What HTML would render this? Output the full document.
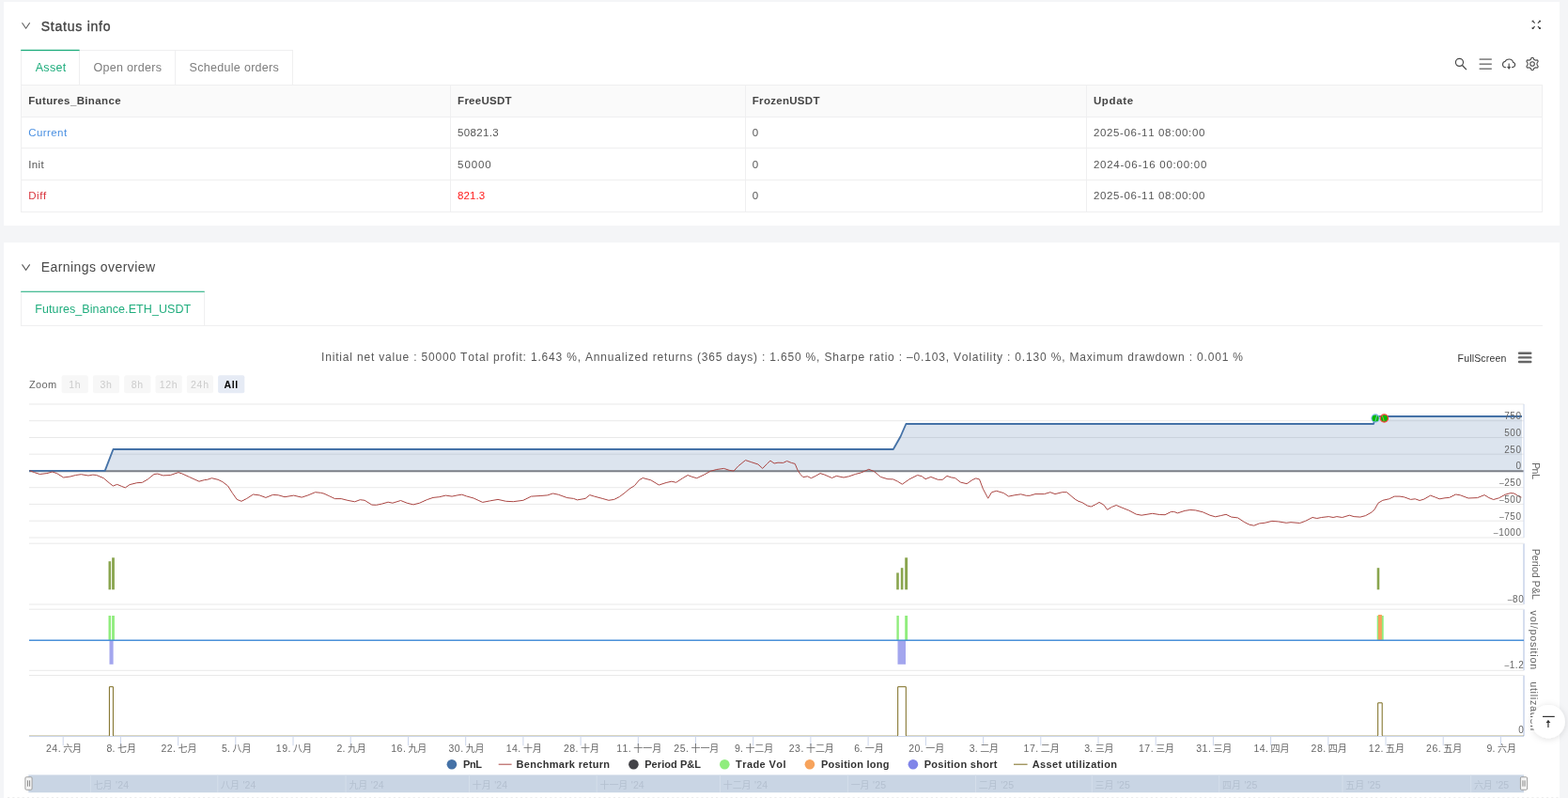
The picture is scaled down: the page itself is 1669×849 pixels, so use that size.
<!DOCTYPE html>
<html><head><meta charset="utf-8"><title>Backtest</title>
<style>
html,body{margin:0;padding:0}
body{width:1669px;height:849px;overflow:hidden;position:relative;background:#f4f5f7;font-family:"Liberation Sans",sans-serif;font-size:13px;color:#555}
.panel{position:absolute;background:#fff}
.ln{position:absolute}
.t{position:absolute;white-space:nowrap;line-height:20px;font-kerning:none}
.yl{font-size:10px;fill:#666;letter-spacing:0.55px}
.yt{font-size:10.8px;fill:#666}
.xl{font-size:10.5px;fill:#666}
.lg{font-size:11px;font-weight:bold;fill:#333}
.nv{font-size:10.5px;fill:#b4c0d0}
.tt{font-size:12px;fill:#585858}
.fs{font-size:10.5px;fill:#333}
.zm{font-size:11px;fill:#666}
.zb{font-size:10.5px;fill:#cccccc;letter-spacing:0.7px}
.cx{font-size:10px;fill:#666}
.cn{font-size:10px;fill:#b4c0d0}
svg text{font-family:"Liberation Sans","Noto Sans CJK SC",sans-serif;font-kerning:none}
</style></head><body>
<div class="panel" style="left:4px;top:2px;width:1656px;height:238px"></div>
<div class="panel" style="left:4px;top:258px;width:1656px;height:600px"></div>
<div class="ln" style="left:22px;top:90px;width:1620px;height:34px;background:#fafafa"></div>
<div class="ln" style="left:22px;top:90px;width:1620px;height:1px;background:#efeff0"></div>
<div class="ln" style="left:22px;top:124px;width:1620px;height:1px;background:#efeff0"></div>
<div class="ln" style="left:22px;top:157px;width:1620px;height:1px;background:#efeff0"></div>
<div class="ln" style="left:22px;top:191px;width:1620px;height:1px;background:#efeff0"></div>
<div class="ln" style="left:22px;top:225px;width:1620px;height:1px;background:#efeff0"></div>
<div class="ln" style="left:22px;top:90px;width:1px;height:136px;background:#efeff0"></div>
<div class="ln" style="left:479px;top:90px;width:1px;height:136px;background:#efeff0"></div>
<div class="ln" style="left:793px;top:90px;width:1px;height:136px;background:#efeff0"></div>
<div class="ln" style="left:1156px;top:90px;width:1px;height:136px;background:#efeff0"></div>
<div class="ln" style="left:1641px;top:90px;width:1px;height:136px;background:#efeff0"></div>
<div class="ln" style="left:22px;top:53px;width:290px;height:1px;background:#efeff0"></div>
<div class="ln" style="left:22px;top:53px;width:1px;height:37px;background:#efeff0"></div>
<div class="ln" style="left:84px;top:53px;width:1px;height:37px;background:#efeff0"></div>
<div class="ln" style="left:186px;top:53px;width:1px;height:37px;background:#efeff0"></div>
<div class="ln" style="left:311px;top:53px;width:1px;height:37px;background:#efeff0"></div>
<div class="ln" style="left:22px;top:346px;width:1620px;height:1px;background:#efeff0"></div>
<div class="ln" style="left:22px;top:310px;width:1px;height:37px;background:#efeff0"></div>
<div class="ln" style="left:217px;top:310px;width:1px;height:37px;background:#efeff0"></div>
<div style="position:absolute;left:0;top:0;width:1669px;height:849px;will-change:transform">
<span class="t" style="left:43.7px;top:18.15px;font-size:14px;letter-spacing:0.766px;color:#444;font-weight:normal;-webkit-text-stroke:0.35px #444;">Status info</span>
<span class="t" style="left:43.8px;top:274.15px;font-size:14px;letter-spacing:0.427px;color:#484848;font-weight:normal;">Earnings overview</span>
<span class="t" style="left:37.7px;top:61.57px;font-size:12.5px;letter-spacing:0.313px;color:#1fad7d;font-weight:normal;">Asset</span>
<span class="t" style="left:99.4px;top:61.57px;font-size:12.5px;letter-spacing:0.323px;color:#7d7d7d;font-weight:normal;">Open orders</span>
<span class="t" style="left:201.6px;top:61.57px;font-size:12.5px;letter-spacing:0.299px;color:#7d7d7d;font-weight:normal;">Schedule orders</span>
<span class="t" style="left:37.3px;top:318.57px;font-size:12.5px;letter-spacing:0.085px;color:#1fad7d;font-weight:normal;">Futures_Binance.ETH_USDT</span>
<span class="t" style="left:30.2px;top:96.92px;font-size:11.5px;letter-spacing:0.360px;color:#444;font-weight:bold;">Futures_Binance</span>
<span class="t" style="left:487.1px;top:96.92px;font-size:11.5px;letter-spacing:0.264px;color:#444;font-weight:bold;">FreeUSDT</span>
<span class="t" style="left:800.8px;top:96.92px;font-size:11.5px;letter-spacing:0.294px;color:#444;font-weight:bold;">FrozenUSDT</span>
<span class="t" style="left:1163.9px;top:96.92px;font-size:11.5px;letter-spacing:0.674px;color:#444;font-weight:bold;">Update</span>
<span class="t" style="left:30.2px;top:131.02px;font-size:11.5px;letter-spacing:0.434px;color:#4a90e2;font-weight:normal;">Current</span>
<span class="t" style="left:487.1px;top:131.02px;font-size:11.5px;letter-spacing:0.313px;color:#555555;font-weight:normal;">50821.3</span>
<span class="t" style="left:800.8px;top:131.02px;font-size:11.5px;letter-spacing:0.552px;color:#555555;font-weight:normal;">0</span>
<span class="t" style="left:1163.9px;top:131.02px;font-size:11.5px;letter-spacing:0.648px;color:#555555;font-weight:normal;">2025-06-11 08:00:00</span>
<span class="t" style="left:30.2px;top:164.62px;font-size:11.5px;letter-spacing:0.369px;color:#555555;font-weight:normal;">Init</span>
<span class="t" style="left:487.1px;top:164.62px;font-size:11.5px;letter-spacing:0.917px;color:#555555;font-weight:normal;">50000</span>
<span class="t" style="left:800.8px;top:164.62px;font-size:11.5px;letter-spacing:0.552px;color:#555555;font-weight:normal;">0</span>
<span class="t" style="left:1163.9px;top:164.62px;font-size:11.5px;letter-spacing:0.759px;color:#555555;font-weight:normal;">2024-06-16 00:00:00</span>
<span class="t" style="left:30.2px;top:197.82px;font-size:11.5px;letter-spacing:0.566px;color:#d9363e;font-weight:normal;">Diff</span>
<span class="t" style="left:487.1px;top:197.82px;font-size:11.5px;letter-spacing:0.092px;color:#ff1a1a;font-weight:normal;">821.3</span>
<span class="t" style="left:800.8px;top:197.82px;font-size:11.5px;letter-spacing:0.552px;color:#555555;font-weight:normal;">0</span>
<span class="t" style="left:1163.9px;top:197.82px;font-size:11.5px;letter-spacing:0.648px;color:#555555;font-weight:normal;">2025-06-11 08:00:00</span>
</div>
<svg width="1669" height="849" viewBox="0 0 1669 849" style="position:absolute;left:0;top:0;will-change:transform">
<defs><filter id="sh" x="-50%" y="-50%" width="200%" height="200%"><feDropShadow dx="0" dy="1" stdDeviation="3.5" flood-color="#000" flood-opacity="0.13"/></filter>
<clipPath id="cp4"><rect x="0" y="700" width="1669" height="83"/></clipPath></defs>
<rect x="22.2" y="52.8" width="62.4" height="1.35" fill="#1fad7d"/><rect x="22.2" y="309.75" width="195.5" height="1.05" fill="#1fad7d"/>
<path d="M31 430.0H1622" stroke="#e9e9e9" stroke-width="1"/>
<path d="M31 447.7H1622" stroke="#e9e9e9" stroke-width="1"/>
<path d="M31 465.5H1622" stroke="#e9e9e9" stroke-width="1"/>
<path d="M31 483.2H1622" stroke="#e9e9e9" stroke-width="1"/>
<path d="M31 518.7H1622" stroke="#e9e9e9" stroke-width="1"/>
<path d="M31 536.4H1622" stroke="#e9e9e9" stroke-width="1"/>
<path d="M31 554.2H1622" stroke="#e9e9e9" stroke-width="1"/>
<path d="M31 572.0H1622" stroke="#e9e9e9" stroke-width="1"/>
<path d="M31 500.9 L111.7 500.9 L120.5 478 L950.8 478 L958.5 464.5 L962.2 456 L964.4 451 L1462 451 L1464.5 443 L1620 443 L1620 501 L31 501 Z" fill="#4572A7" fill-opacity="0.19"/>
<path d="M31 501.25H1622" stroke="#7b7f87" stroke-width="2.2"/>
<path d="M31 500.9 L111.7 500.9 L120.5 478 L950.8 478 L958.5 464.5 L962.2 456 L964.4 451 L1462 451 L1464.5 443 L1620 443" fill="none" stroke="#4572A7" stroke-width="1.85" stroke-linejoin="round"/>
<path d="M31.7 500.7 L36.5 502.6 L42.3 504.5 L49.9 503.6 L55.7 502.0 L60.5 503.6 L67.6 508.0 L74.9 507.0 L80.6 505.5 L86.4 504.7 L94.0 506.0 L98.8 505.1 L102.7 505.5 L110.3 508.7 L116.1 513.7 L120.3 517.0 L124.7 515.4 L129.5 517.4 L133.3 518.9 L138.1 515.6 L145.8 513.7 L151.5 513.3 L157.3 509.9 L164.0 504.5 L167.8 504.1 L173.6 505.9 L181.3 505.5 L189.9 502.6 L193.7 503.9 L201.4 507.4 L211.9 512.2 L217.7 510.6 L220.6 510.3 L225.4 508.7 L232.1 510.3 L236.9 512.6 L242.6 517.0 L247.4 524.6 L252.2 531.4 L257.0 533.3 L262.7 530.4 L269.5 526.0 L276.2 526.9 L282.9 529.4 L290.5 526.4 L296.3 526.8 L303.0 528.7 L312.6 527.1 L321.2 529.1 L327.9 526.9 L335.6 523.7 L341.4 524.3 L345.0 525.2 L350.8 527.9 L356.5 530.6 L363.2 530.6 L369.9 532.3 L377.6 533.8 L383.3 531.7 L388.1 532.3 L395.8 537.1 L400.6 537.3 L406.4 536.1 L413.1 534.2 L417.9 535.2 L426.5 532.5 L433.2 535.2 L439.9 536.9 L446.6 535.2 L454.3 531.7 L461.0 529.4 L467.7 528.7 L474.4 527.1 L481.1 528.1 L486.9 526.9 L491.7 526.2 L496.5 527.9 L504.1 530.0 L509.9 532.7 L513.7 534.4 L521.4 532.9 L530.0 531.4 L538.6 533.3 L546.3 533.7 L556.9 532.3 L565.5 528.1 L575.1 527.5 L582.7 526.9 L588.5 525.0 L594.3 526.2 L603.8 529.6 L610.5 530.4 L614.4 531.9 L623.0 530.4 L627.8 526.6 L632.6 528.1 L641.2 530.4 L647.9 532.3 L653.7 531.4 L659.4 528.5 L665.0 524.3 L669.8 520.2 L675.5 516.6 L680.3 510.8 L684.2 508.5 L692.8 510.8 L701.4 516.0 L709.1 513.5 L714.9 512.2 L719.6 513.3 L726.4 508.9 L732.1 505.5 L736.9 507.4 L741.7 508.7 L749.4 505.1 L756.1 501.3 L762.8 499.5 L770.5 498.4 L776.2 500.3 L781.0 501.1 L785.8 495.9 L793.5 489.6 L799.2 491.5 L806.9 494.0 L811.7 498.4 L816.5 493.4 L819.9 490.1 L824.1 493.0 L828.0 492.2 L833.7 492.4 L837.6 490.5 L842.4 492.4 L846.2 493.4 L849.1 500.3 L851.9 504.5 L854.8 507.6 L859.6 506.8 L863.4 508.7 L868.2 506.4 L873.0 503.6 L877.8 505.1 L885.5 508.5 L890.3 506.4 L898.0 508.0 L903.7 506.8 L910.4 504.5 L916.2 503.0 L924.8 499.3 L930.5 501.6 L937.3 507.4 L944.9 509.7 L950.7 509.9 L955.5 512.2 L960.3 515.2 L967.9 509.9 L976.6 505.5 L981.4 506.8 L985.0 509.7 L990.8 507.4 L998.4 510.3 L1003.2 510.3 L1008.0 506.4 L1012.8 508.0 L1016.6 508.5 L1022.4 513.1 L1029.1 514.7 L1034.9 510.6 L1038.7 508.9 L1042.5 509.9 L1046.4 520.2 L1051.7 530.2 L1055.6 523.7 L1060.7 522.3 L1068.4 524.6 L1073.6 528.1 L1079.9 526.8 L1086.6 525.8 L1092.4 527.3 L1096.2 527.3 L1102.0 525.6 L1111.5 525.6 L1117.9 523.7 L1123.0 525.6 L1130.7 523.7 L1135.5 523.7 L1144.1 531.0 L1148.0 533.3 L1151.8 534.6 L1157.6 538.1 L1161.4 539.0 L1166.2 536.7 L1170.0 534.4 L1174.8 537.1 L1178.6 542.3 L1183.4 539.4 L1188.2 537.5 L1193.0 539.6 L1201.7 543.1 L1209.3 547.1 L1215.1 548.2 L1226.6 546.3 L1234.3 547.5 L1240.0 547.7 L1246.7 544.4 L1249.6 544.4 L1253.4 545.9 L1261.1 543.4 L1266.8 542.5 L1272.6 542.9 L1280.3 544.8 L1287.9 548.2 L1293.7 549.8 L1299.4 548.6 L1305.0 547.3 L1310.8 550.1 L1317.5 550.9 L1324.2 555.3 L1329.9 558.2 L1334.7 559.2 L1340.5 556.9 L1346.2 556.3 L1353.9 554.4 L1360.6 554.9 L1369.2 556.3 L1374.0 555.7 L1383.6 556.5 L1389.4 554.4 L1397.0 550.5 L1401.8 551.5 L1406.6 550.5 L1414.3 549.6 L1419.1 550.5 L1422.9 549.6 L1428.7 550.5 L1436.3 548.2 L1441.1 549.6 L1447.8 550.1 L1453.6 548.6 L1460.3 544.8 L1463.2 541.9 L1467.0 535.2 L1471.8 532.3 L1478.5 530.8 L1484.3 528.1 L1490.0 528.1 L1494.8 528.9 L1501.5 531.4 L1506.3 530.8 L1511.1 532.5 L1515.9 531.0 L1522.6 527.1 L1527.4 528.9 L1532.2 530.8 L1538.0 529.8 L1542.7 529.4 L1549.5 526.0 L1554.3 526.8 L1562.9 530.0 L1572.5 529.6 L1580.1 526.6 L1584.9 529.6 L1589.7 531.5 L1595.5 529.8 L1602.2 526.2 L1607.9 524.6 L1611.8 525.0 L1616.6 528.1 L1619.4 529.1" fill="none" stroke="#AA4643" stroke-width="1" stroke-linejoin="round"/>
<circle cx="1464" cy="445" r="4.1" fill="#00bb00" stroke="#8ab8f0" stroke-width="1.1"/>
<circle cx="1473.4" cy="445" r="4.1" fill="#00bb00" stroke="#ff4040" stroke-width="1.3"/>
<path d="M1465.7 441.8L1463.9 448.2" stroke="#9cc4f2" stroke-width="0.8"/><path d="M1471.4 442.2L1473.2 448" stroke="#ff7a6a" stroke-width="0.8"/>
<text x="1619.6" y="446.0" text-anchor="end" class="yl">750</text>
<text x="1619.6" y="463.8" text-anchor="end" class="yl">500</text>
<text x="1619.6" y="481.5" text-anchor="end" class="yl">250</text>
<text x="1619.6" y="499.3" text-anchor="end" class="yl">0</text>
<text x="1619.6" y="517.0" text-anchor="end" class="yl"><tspan font-size="8.6">–</tspan>250</text>
<text x="1619.6" y="534.7" text-anchor="end" class="yl"><tspan font-size="8.6">–</tspan>500</text>
<text x="1619.6" y="552.5" text-anchor="end" class="yl"><tspan font-size="8.6">–</tspan>750</text>
<text x="1619.6" y="570.3" text-anchor="end" class="yl"><tspan font-size="8.6">–</tspan>1000</text>
<path d="M1622 430V572" stroke="#ccd6eb" stroke-width="1"/>
<path d="M1622 578.2V643" stroke="#ccd6eb" stroke-width="1.6"/>
<path d="M1622 648.2V713.3" stroke="#ccd6eb" stroke-width="1.6"/>
<path d="M1622 718.5V783" stroke="#ccd6eb" stroke-width="1.6"/>
<path d="M31 578.2H1622" stroke="#e9e9e9" stroke-width="1"/>
<path d="M31 643H1622" stroke="#e9e9e9" stroke-width="1"/>
<path d="M31 648.2H1622" stroke="#e9e9e9" stroke-width="1"/>
<path d="M31 713.3H1622" stroke="#e9e9e9" stroke-width="1"/>
<path d="M31 718.5H1622" stroke="#e9e9e9" stroke-width="1"/>
<rect x="115.5" y="597.2" width="2.60" height="30.10" fill="#89A54E" />
<rect x="119.1" y="593.3" width="2.80" height="34.00" fill="#89A54E" />
<rect x="954.2" y="609.4" width="2.60" height="17.90" fill="#89A54E" />
<rect x="958.8" y="604.2" width="2.60" height="23.10" fill="#89A54E" />
<rect x="963.2" y="593.3" width="2.90" height="34.00" fill="#89A54E" />
<rect x="1465.7" y="604.2" width="2.60" height="23.10" fill="#89A54E" />
<rect x="115.5" y="655" width="2.60" height="26.00" fill="#90ed7d" />
<rect x="119.1" y="655" width="2.80" height="26.00" fill="#90ed7d" />
<rect x="954.4" y="655" width="2.40" height="26.00" fill="#90ed7d" />
<rect x="963.2" y="655" width="2.90" height="26.00" fill="#90ed7d" />
<rect x="1465.7" y="655" width="7.00" height="26.00" fill="#90ed7d" />
<rect x="116.5" y="681" width="4.10" height="25.80" fill="#a3a6ee" />
<rect x="955.5" y="681" width="8.50" height="25.80" fill="#a3a6ee" />
<rect x="1467" y="654" width="3.90" height="27.00" fill="#f7a35c" />
<path d="M31 681.2H1622" stroke="#4a90d9" stroke-width="1.6"/>
<path d="M31 783.5H1622" stroke="#ccd6eb" stroke-width="1"/>
<path d="M31 782.5H1622" fill="none" stroke="#7a6a1e" stroke-width="1" stroke-opacity="0.28"/>
<path d="M116.4 783V730.7H120.4V783" fill="none" stroke="#7a6a1e" stroke-width="1"/>
<path d="M116.9 782.5H119.9" stroke="#fff" stroke-width="1"/>
<path d="M955.7 783V730.7H964.3V783" fill="none" stroke="#7a6a1e" stroke-width="1"/>
<path d="M956.2 782.5H963.8" stroke="#fff" stroke-width="1"/>
<path d="M1466.7 783V747.8H1471.2V783" fill="none" stroke="#7a6a1e" stroke-width="1"/>
<path d="M1467.2 782.5H1470.7" stroke="#fff" stroke-width="1"/>
<text x="1622.3" y="640.7" text-anchor="end" class="yl"><tspan font-size="8.6">–</tspan>80</text>
<text x="1622.3" y="710.6" text-anchor="end" class="yl"><tspan font-size="8.6">–</tspan>1.2</text>
<text x="1622.3" y="780.4" text-anchor="end" class="yl">0</text>
<text transform="translate(1631.0 492.0) rotate(90)" class="yt" textLength="18.0" lengthAdjust="spacing">PnL</text>
<text transform="translate(1630.5 583.7) rotate(90)" class="yt" textLength="54.2" lengthAdjust="spacing">Period P&amp;L</text>
<text transform="translate(1628.9 649.5) rotate(90)" class="yt" textLength="62.7" lengthAdjust="spacing">vol/position</text>
<text transform="translate(1628.9 725.2) rotate(90)" class="yt" textLength="52.0" lengthAdjust="spacing">utilization</text>
<path d="M67.2 784V793.3" stroke="#ccd6eb" stroke-width="1"/>
<text x="49.00" y="800" class="xl" textLength="15.6" lengthAdjust="spacing">24.</text>
<text x="67.20" y="800.3" class="cx" textLength="19.9" lengthAdjust="spacing">六月</text>
<path d="M128.4 784V793.3" stroke="#ccd6eb" stroke-width="1"/>
<text x="113.56" y="800" class="xl" textLength="8.9" lengthAdjust="spacing">8.</text>
<text x="125.06" y="800.3" class="cx" textLength="19.9" lengthAdjust="spacing">七月</text>
<path d="M189.6 784V793.3" stroke="#ccd6eb" stroke-width="1"/>
<text x="171.42" y="800" class="xl" textLength="15.6" lengthAdjust="spacing">22.</text>
<text x="189.62" y="800.3" class="cx" textLength="19.9" lengthAdjust="spacing">七月</text>
<path d="M250.8 784V793.3" stroke="#ccd6eb" stroke-width="1"/>
<text x="235.98" y="800" class="xl" textLength="8.9" lengthAdjust="spacing">5.</text>
<text x="247.48" y="800.3" class="cx" textLength="19.9" lengthAdjust="spacing">八月</text>
<path d="M312.0 784V793.3" stroke="#ccd6eb" stroke-width="1"/>
<text x="293.84" y="800" class="xl" textLength="15.6" lengthAdjust="spacing">19.</text>
<text x="312.04" y="800.3" class="cx" textLength="19.9" lengthAdjust="spacing">八月</text>
<path d="M373.2 784V793.3" stroke="#ccd6eb" stroke-width="1"/>
<text x="358.40" y="800" class="xl" textLength="8.9" lengthAdjust="spacing">2.</text>
<text x="369.90" y="800.3" class="cx" textLength="19.9" lengthAdjust="spacing">九月</text>
<path d="M434.5 784V793.3" stroke="#ccd6eb" stroke-width="1"/>
<text x="416.26" y="800" class="xl" textLength="15.6" lengthAdjust="spacing">16.</text>
<text x="434.46" y="800.3" class="cx" textLength="19.9" lengthAdjust="spacing">九月</text>
<path d="M495.7 784V793.3" stroke="#ccd6eb" stroke-width="1"/>
<text x="477.47" y="800" class="xl" textLength="15.6" lengthAdjust="spacing">30.</text>
<text x="495.67" y="800.3" class="cx" textLength="19.9" lengthAdjust="spacing">九月</text>
<path d="M556.9 784V793.3" stroke="#ccd6eb" stroke-width="1"/>
<text x="538.68" y="800" class="xl" textLength="15.6" lengthAdjust="spacing">14.</text>
<text x="556.88" y="800.3" class="cx" textLength="19.9" lengthAdjust="spacing">十月</text>
<path d="M618.1 784V793.3" stroke="#ccd6eb" stroke-width="1"/>
<text x="599.89" y="800" class="xl" textLength="15.6" lengthAdjust="spacing">28.</text>
<text x="618.09" y="800.3" class="cx" textLength="19.9" lengthAdjust="spacing">十月</text>
<path d="M679.3 784V793.3" stroke="#ccd6eb" stroke-width="1"/>
<text x="656.15" y="800" class="xl" textLength="15.6" lengthAdjust="spacing">11.</text>
<text x="674.35" y="800.3" class="cx" textLength="29.8" lengthAdjust="spacing">十一月</text>
<path d="M740.5 784V793.3" stroke="#ccd6eb" stroke-width="1"/>
<text x="717.36" y="800" class="xl" textLength="15.6" lengthAdjust="spacing">25.</text>
<text x="735.56" y="800.3" class="cx" textLength="29.8" lengthAdjust="spacing">十一月</text>
<path d="M801.7 784V793.3" stroke="#ccd6eb" stroke-width="1"/>
<text x="781.92" y="800" class="xl" textLength="8.9" lengthAdjust="spacing">9.</text>
<text x="793.42" y="800.3" class="cx" textLength="29.8" lengthAdjust="spacing">十二月</text>
<path d="M862.9 784V793.3" stroke="#ccd6eb" stroke-width="1"/>
<text x="839.78" y="800" class="xl" textLength="15.6" lengthAdjust="spacing">23.</text>
<text x="857.98" y="800.3" class="cx" textLength="29.8" lengthAdjust="spacing">十二月</text>
<path d="M924.1 784V793.3" stroke="#ccd6eb" stroke-width="1"/>
<text x="909.29" y="800" class="xl" textLength="8.9" lengthAdjust="spacing">6.</text>
<text x="920.79" y="800.3" class="cx" textLength="19.9" lengthAdjust="spacing">一月</text>
<path d="M985.4 784V793.3" stroke="#ccd6eb" stroke-width="1"/>
<text x="967.15" y="800" class="xl" textLength="15.6" lengthAdjust="spacing">20.</text>
<text x="985.35" y="800.3" class="cx" textLength="19.9" lengthAdjust="spacing">一月</text>
<path d="M1046.6 784V793.3" stroke="#ccd6eb" stroke-width="1"/>
<text x="1031.71" y="800" class="xl" textLength="8.9" lengthAdjust="spacing">3.</text>
<text x="1043.21" y="800.3" class="cx" textLength="19.9" lengthAdjust="spacing">二月</text>
<path d="M1107.8 784V793.3" stroke="#ccd6eb" stroke-width="1"/>
<text x="1089.57" y="800" class="xl" textLength="15.6" lengthAdjust="spacing">17.</text>
<text x="1107.77" y="800.3" class="cx" textLength="19.9" lengthAdjust="spacing">二月</text>
<path d="M1169.0 784V793.3" stroke="#ccd6eb" stroke-width="1"/>
<text x="1154.13" y="800" class="xl" textLength="8.9" lengthAdjust="spacing">3.</text>
<text x="1165.63" y="800.3" class="cx" textLength="19.9" lengthAdjust="spacing">三月</text>
<path d="M1230.2 784V793.3" stroke="#ccd6eb" stroke-width="1"/>
<text x="1211.99" y="800" class="xl" textLength="15.6" lengthAdjust="spacing">17.</text>
<text x="1230.19" y="800.3" class="cx" textLength="19.9" lengthAdjust="spacing">三月</text>
<path d="M1291.4 784V793.3" stroke="#ccd6eb" stroke-width="1"/>
<text x="1273.20" y="800" class="xl" textLength="15.6" lengthAdjust="spacing">31.</text>
<text x="1291.40" y="800.3" class="cx" textLength="19.9" lengthAdjust="spacing">三月</text>
<path d="M1352.6 784V793.3" stroke="#ccd6eb" stroke-width="1"/>
<text x="1334.41" y="800" class="xl" textLength="15.6" lengthAdjust="spacing">14.</text>
<text x="1352.61" y="800.3" class="cx" textLength="19.9" lengthAdjust="spacing">四月</text>
<path d="M1413.8 784V793.3" stroke="#ccd6eb" stroke-width="1"/>
<text x="1395.62" y="800" class="xl" textLength="15.6" lengthAdjust="spacing">28.</text>
<text x="1413.82" y="800.3" class="cx" textLength="19.9" lengthAdjust="spacing">四月</text>
<path d="M1475.0 784V793.3" stroke="#ccd6eb" stroke-width="1"/>
<text x="1456.83" y="800" class="xl" textLength="15.6" lengthAdjust="spacing">12.</text>
<text x="1475.03" y="800.3" class="cx" textLength="19.9" lengthAdjust="spacing">五月</text>
<path d="M1536.2 784V793.3" stroke="#ccd6eb" stroke-width="1"/>
<text x="1518.04" y="800" class="xl" textLength="15.6" lengthAdjust="spacing">26.</text>
<text x="1536.24" y="800.3" class="cx" textLength="19.9" lengthAdjust="spacing">五月</text>
<path d="M1597.5 784V793.3" stroke="#ccd6eb" stroke-width="1"/>
<text x="1582.60" y="800" class="xl" textLength="8.9" lengthAdjust="spacing">9.</text>
<text x="1594.10" y="800.3" class="cx" textLength="19.9" lengthAdjust="spacing">六月</text>
<circle cx="480.9" cy="813.2" r="5.3" fill="#4572A7"/>
<text x="493" y="817.1" class="lg" textLength="20.1" lengthAdjust="spacing">PnL</text>
<path d="M530.7 813.2H544.6" stroke="#AA4643" stroke-width="1"/>
<text x="549.6" y="817.1" class="lg" textLength="99.4" lengthAdjust="spacing">Benchmark return</text>
<circle cx="674.4" cy="813.2" r="5.3" fill="#434348"/>
<text x="686.2" y="817.1" class="lg" textLength="59.9" lengthAdjust="spacing">Period P&amp;L</text>
<circle cx="771.3" cy="813.2" r="5.3" fill="#90ed7d"/>
<text x="783.1" y="817.1" class="lg" textLength="53.4" lengthAdjust="spacing">Trade Vol</text>
<circle cx="861.9" cy="813.2" r="5.3" fill="#f7a35c"/>
<text x="874" y="817.1" class="lg" textLength="72.4" lengthAdjust="spacing">Position long</text>
<circle cx="971.9" cy="813.2" r="5.3" fill="#8085e9"/>
<text x="983.7" y="817.1" class="lg" textLength="77.7" lengthAdjust="spacing">Position short</text>
<path d="M1079 813.2H1093.6" stroke="#7a6a1e" stroke-width="1"/>
<text x="1098.7" y="817.1" class="lg" textLength="90.3" lengthAdjust="spacing">Asset utilization</text>
<rect x="30.3" y="824.4" width="1591.7" height="18.8" fill="#c9d5e4"/>
<path d="M8 848.6H1660" stroke="#ececec" stroke-width="1" stroke-dasharray="2.2 3"/>
<path d="M96.4 824.6V843" stroke="#d4deea" stroke-width="1"/>
<text x="99.70" y="839" class="cn" textLength="19.9" lengthAdjust="spacing">七月</text>
<text x="123.1" y="839" class="nv" textLength="13.9" lengthAdjust="spacing">'24</text>
<path d="M231.8 824.6V843" stroke="#d4deea" stroke-width="1"/>
<text x="235.10" y="839" class="cn" textLength="19.9" lengthAdjust="spacing">八月</text>
<text x="258.5" y="839" class="nv" textLength="13.9" lengthAdjust="spacing">'24</text>
<path d="M368.1 824.6V843" stroke="#d4deea" stroke-width="1"/>
<text x="371.40" y="839" class="cn" textLength="19.9" lengthAdjust="spacing">九月</text>
<text x="394.8" y="839" class="nv" textLength="13.9" lengthAdjust="spacing">'24</text>
<path d="M499.5 824.6V843" stroke="#d4deea" stroke-width="1"/>
<text x="502.80" y="839" class="cn" textLength="19.9" lengthAdjust="spacing">十月</text>
<text x="526.2" y="839" class="nv" textLength="13.9" lengthAdjust="spacing">'24</text>
<path d="M635.2 824.6V843" stroke="#d4deea" stroke-width="1"/>
<text x="638.50" y="839" class="cn" textLength="29.8" lengthAdjust="spacing">十一月</text>
<text x="671.8" y="839" class="nv" textLength="13.9" lengthAdjust="spacing">'24</text>
<path d="M766.5 824.6V843" stroke="#d4deea" stroke-width="1"/>
<text x="769.80" y="839" class="cn" textLength="29.8" lengthAdjust="spacing">十二月</text>
<text x="803.1" y="839" class="nv" textLength="13.9" lengthAdjust="spacing">'24</text>
<path d="M902.4 824.6V843" stroke="#d4deea" stroke-width="1"/>
<text x="905.70" y="839" class="cn" textLength="19.9" lengthAdjust="spacing">一月</text>
<text x="929.1" y="839" class="nv" textLength="13.9" lengthAdjust="spacing">'25</text>
<path d="M1038.5 824.6V843" stroke="#d4deea" stroke-width="1"/>
<text x="1041.80" y="839" class="cn" textLength="19.9" lengthAdjust="spacing">二月</text>
<text x="1065.2" y="839" class="nv" textLength="13.9" lengthAdjust="spacing">'25</text>
<path d="M1162.3 824.6V843" stroke="#d4deea" stroke-width="1"/>
<text x="1165.60" y="839" class="cn" textLength="19.9" lengthAdjust="spacing">三月</text>
<text x="1189.0" y="839" class="nv" textLength="13.9" lengthAdjust="spacing">'25</text>
<path d="M1297.7 824.6V843" stroke="#d4deea" stroke-width="1"/>
<text x="1301.00" y="839" class="cn" textLength="19.9" lengthAdjust="spacing">四月</text>
<text x="1324.4" y="839" class="nv" textLength="13.9" lengthAdjust="spacing">'25</text>
<path d="M1429 824.6V843" stroke="#d4deea" stroke-width="1"/>
<text x="1432.30" y="839" class="cn" textLength="19.9" lengthAdjust="spacing">五月</text>
<text x="1455.7" y="839" class="nv" textLength="13.9" lengthAdjust="spacing">'25</text>
<path d="M1565.6 824.6V843" stroke="#d4deea" stroke-width="1"/>
<text x="1568.90" y="839" class="cn" textLength="19.9" lengthAdjust="spacing">六月</text>
<text x="1592.3" y="839" class="nv" textLength="13.9" lengthAdjust="spacing">'25</text>
<rect x="26.9" y="826.7" width="7.2" height="13.6" rx="1.3" fill="#f4f4f4" stroke="#a0a0a0" stroke-width="1"/><path d="M29.45 830.3V836.7M31.55 830.3V836.7" stroke="#666" stroke-width="0.75"/>
<rect x="1618.4" y="826.7" width="7.2" height="13.6" rx="1.3" fill="#f4f4f4" stroke="#a0a0a0" stroke-width="1"/><path d="M1620.95 830.3V836.7M1623.05 830.3V836.7" stroke="#666" stroke-width="0.75"/>
<text x="342" y="383.6" class="tt" textLength="981" lengthAdjust="spacing">Initial net value : 50000 Total profit: 1.643 %, Annualized returns (365 days) : 1.650 %, Sharpe ratio : –0.103, Volatility : 0.130 %, Maximum drawdown : 0.001 %</text>
<text x="1551.6" y="384.7" class="fs" textLength="51.7" lengthAdjust="spacing">FullScreen</text>
<path d="M1617 375.8H1629.3" stroke="#666" stroke-width="2.4" stroke-linecap="round"/>
<path d="M1617 380.4H1629.3" stroke="#666" stroke-width="2.4" stroke-linecap="round"/>
<path d="M1617 385.0H1629.3" stroke="#666" stroke-width="2.4" stroke-linecap="round"/>
<text x="31" y="413.1" class="zm" textLength="29.2" lengthAdjust="spacing">Zoom</text>
<rect x="65.6" y="399.2" width="28.2" height="19" rx="2" fill="#f7f7f7"/>
<text x="79.69999999999999" y="413.1" text-anchor="middle" class="zb">1h</text>
<rect x="98.9" y="399.2" width="28.2" height="19" rx="2" fill="#f7f7f7"/>
<text x="113.0" y="413.1" text-anchor="middle" class="zb">3h</text>
<rect x="132.2" y="399.2" width="28.2" height="19" rx="2" fill="#f7f7f7"/>
<text x="146.29999999999998" y="413.1" text-anchor="middle" class="zb">8h</text>
<rect x="165.5" y="399.2" width="28.2" height="19" rx="2" fill="#f7f7f7"/>
<text x="179.6" y="413.1" text-anchor="middle" class="zb">12h</text>
<rect x="198.8" y="399.2" width="28.2" height="19" rx="2" fill="#f7f7f7"/>
<text x="212.9" y="413.1" text-anchor="middle" class="zb">24h</text>
<rect x="232.1" y="399.2" width="28.2" height="19" rx="2" fill="#e6ebf5"/>
<text x="246.2" y="413.1" text-anchor="middle" class="zb" style="fill:#000;font-weight:bold">All</text>
<circle cx="1553.45" cy="66.37" r="4.05" fill="none" stroke="#474747" stroke-width="1.15"/><path d="M1556.5 69.5L1560.9 74.1" stroke="#474747" stroke-width="1.3"/><path d="M1574.6 63.07H1587.8" stroke="#737373" stroke-width="1.45"/><path d="M1574.6 68.18H1587.8" stroke="#737373" stroke-width="1.45"/><path d="M1574.6 73.22H1587.8" stroke="#737373" stroke-width="1.45"/><path d="M1602.7 71.8C1600.5 71.6 1599.5 70.2 1599.5 68.5C1599.5 66.8 1600.6 65.6 1602.2 65.2C1602.7 63.8 1604.3 63 1606.4 63C1608.6 63 1610.1 64.3 1610.5 66.2C1611.9 66.5 1612.7 67.6 1612.6 69C1612.5 70.6 1611.4 71.5 1609.6 71.6" fill="none" stroke="#474747" stroke-width="1.1" stroke-linecap="round"/><path d="M1606.15 67.4V72.6" stroke="#474747" stroke-width="1.1"/><path d="M1604.4 71.2L1606.15 73.5L1607.9 71.2Z" fill="#474747" stroke="#474747" stroke-width="0.5" stroke-linejoin="round"/><path d="M1628.62 63.79Q1629.66 63.20 1629.81 62.19Q1629.97 61.18 1631.05 61.18Q1632.13 61.18 1632.29 62.19Q1632.44 63.20 1633.48 63.79Q1634.51 64.39 1635.46 64.02Q1636.41 63.66 1636.95 64.59Q1637.49 65.53 1636.70 66.17Q1635.91 66.81 1635.91 68.00Q1635.91 69.19 1636.70 69.83Q1637.49 70.47 1636.95 71.41Q1636.41 72.34 1635.46 71.98Q1634.51 71.61 1633.48 72.21Q1632.44 72.80 1632.29 73.81Q1632.13 74.82 1631.05 74.82Q1629.97 74.82 1629.81 73.81Q1629.66 72.80 1628.62 72.21Q1627.59 71.61 1626.64 71.98Q1625.69 72.34 1625.15 71.41Q1624.61 70.47 1625.40 69.83Q1626.19 69.19 1626.19 68.00Q1626.19 66.81 1625.40 66.17Q1624.61 65.53 1625.15 64.59Q1625.69 63.66 1626.64 64.02Q1627.59 64.39 1628.62 63.79Z" fill="none" stroke="#474747" stroke-width="1.1" stroke-linejoin="round"/><circle cx="1631.05" cy="68.0" r="2.3" fill="none" stroke="#474747" stroke-width="1.05"/><path d="M1633.65 24.55L1631.40 22.35" stroke="#333" stroke-width="1.05"/><path d="M1630.70 21.65L1632.90 21.65L1630.70 23.85Z" fill="#333"/><path d="M1636.95 24.55L1639.20 22.35" stroke="#333" stroke-width="1.05"/><path d="M1639.90 21.65L1637.70 21.65L1639.90 23.85Z" fill="#333"/><path d="M1633.65 28.05L1631.40 30.25" stroke="#333" stroke-width="1.05"/><path d="M1630.70 30.95L1632.90 30.95L1630.70 28.75Z" fill="#333"/><path d="M1636.95 28.05L1639.20 30.25" stroke="#333" stroke-width="1.05"/><path d="M1639.90 30.95L1637.70 30.95L1639.90 28.75Z" fill="#333"/><path d="M23.5 24.3L27.6 30.2L31.7 24.3" fill="none" stroke="#555" stroke-width="1.05"/><path d="M23.5 281.4L27.6 287.29999999999995L31.7 281.4" fill="none" stroke="#555" stroke-width="1.05"/>
<circle cx="1648.2" cy="767.7" r="17.7" fill="#fff" filter="url(#sh)"/><path d="M1642 762.4H1654.75" stroke="#333" stroke-width="1.2"/><path d="M1647.95 773.9V767.5" stroke="#333" stroke-width="1.2"/><path d="M1645.6 769L1647.95 765.8L1650.3 769Z" fill="#333"/>
</svg>
</body></html>
